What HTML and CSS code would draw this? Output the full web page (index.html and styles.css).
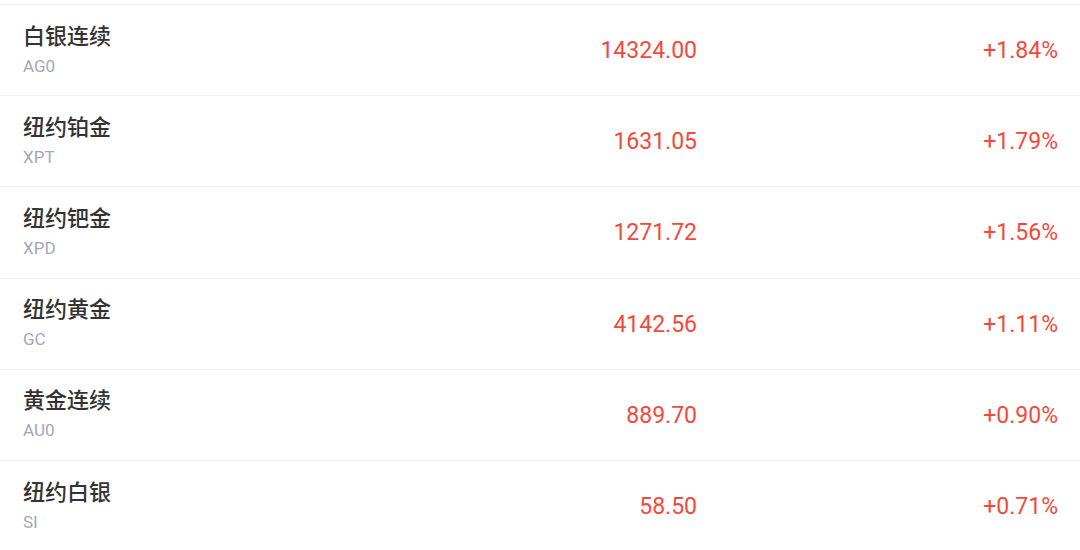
FILE: index.html
```html
<!DOCTYPE html>
<html lang="zh-CN">
<head>
    <meta charset="UTF-8">
    <meta name="viewport" content="width=device-width, initial-scale=1.0">
    <title>贵金属行情</title>
    <link rel="stylesheet" href="styles.css">
</head>
<body>

<div class="list">
    <div class="row">
        <div class="name">
            <div class="title">白银连续</div>
            <div class="code">AG0</div>
        </div>
        <div class="price up">14324.00</div>
        <div class="change up">+1.84%</div>
    </div>
    <div class="row">
        <div class="name">
            <div class="title">纽约铂金</div>
            <div class="code">XPT</div>
        </div>
        <div class="price up">1631.05</div>
        <div class="change up">+1.79%</div>
    </div>
    <div class="row">
        <div class="name">
            <div class="title">纽约钯金</div>
            <div class="code">XPD</div>
        </div>
        <div class="price up">1271.72</div>
        <div class="change up">+1.56%</div>
    </div>
    <div class="row">
        <div class="name">
            <div class="title">纽约黄金</div>
            <div class="code">GC</div>
        </div>
        <div class="price up">4142.56</div>
        <div class="change up">+1.11%</div>
    </div>
    <div class="row">
        <div class="name">
            <div class="title">黄金连续</div>
            <div class="code">AU0</div>
        </div>
        <div class="price up">889.70</div>
        <div class="change up">+0.90%</div>
    </div>
    <div class="row">
        <div class="name">
            <div class="title">纽约白银</div>
            <div class="code">SI</div>
        </div>
        <div class="price up">58.50</div>
        <div class="change up">+0.71%</div>
    </div>
</div>

</body>
</html>
```

FILE: styles.css
```css
body {
    margin: 0;
    background-color: #fff;
    font-family: Roboto, "Noto Sans CJK SC", sans-serif;
    overflow: hidden;
}

.list {
    padding-top: 4px;
}

.row {
    display: grid;
    grid-template-columns: 1fr 300px 361px;
    align-items: center;
    height: 91.2px;
    box-sizing: border-box;
    padding: 0 22px 0 23px;
    border-top: 1px solid #efeff3;
}

.name {
    padding-bottom: 4px;
}

.title {
    font-family: "Noto Sans CJK SC", sans-serif;
    font-size: 22px;
    font-weight: 500;
    line-height: 28px;
    color: #333;
}

.code {
    font-size: 17px;
    line-height: 22px;
    color: #a3a7b9;
    margin-top: 7px;
}

.price,
.change {
    text-align: right;
    font-size: 23px;
    margin-top: 1px;
}

.up {
    color: #f5483b;
}
```
